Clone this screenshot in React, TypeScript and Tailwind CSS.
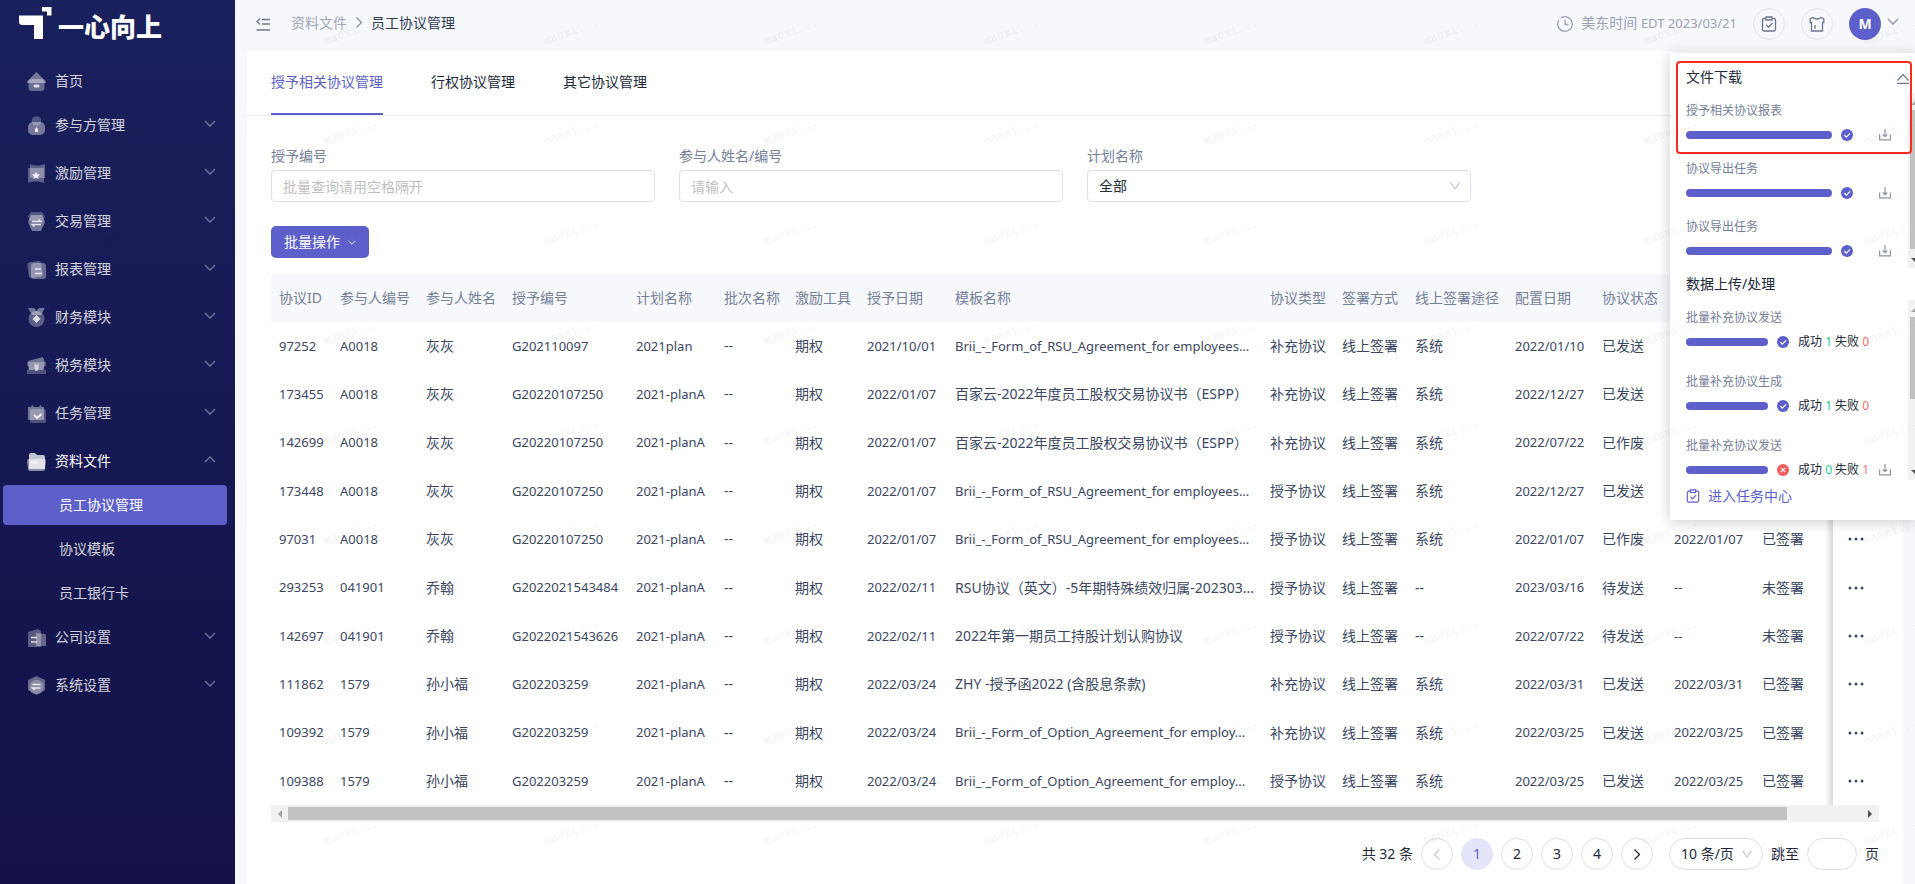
import type { ReactNode } from "react";
import { clsx } from "clsx";

type MenuItem = {
  label: string;
  icon: ReactNode;
  open?: boolean;
  leaf?: boolean;
  children?: string[];
};

type Agreement = {
  id: string;
  code: string;
  name: string;
  grant: string;
  plan: string;
  grantDate: string;
  template: string;
  type: string;
  channel: string;
  configDate: string;
  status: string;
  signDate: string;
  signStatus: string;
};

type UploadTask = {
  name: string;
  success: number;
  failed: number;
};

const menu: MenuItem[] = [
  {
    label: "首页",
    leaf: true,
    icon: (
      <>
        <path d="M9.500 0 19 9.500a1 1 0 0 1-.7 1.500H.7A1 1 0 0 1 0 9.500z" opacity=".4" />
        <rect x="1.500" y="7" width="16" height="12" rx="3.500" opacity=".35" />
        <rect x="6.500" y="12.500" width="6" height="3" rx="1.500" opacity=".8" />
      </>
    ),
  },
  {
    label: "参与方管理",
    icon: (
      <>
        <circle cx="9.500" cy="5" r="4.800" opacity=".25" />
        <rect x="1" y="6" width="17" height="13" rx="5" opacity=".4" />
        <path d="M9.500 11c1.500 1.500 2 3 1.500 5H8c-.5-2 0-3.500 1.500-5z" opacity=".85" />
      </>
    ),
  },
  {
    label: "激励管理",
    icon: (
      <>
        <path d="M3 0c4 2 9 2 15 0v14H3z" opacity=".3" />
        <path d="M1 4h16v15c-5-2-11-2-16 0z" opacity=".3" />
        <path d="m9 7.500 1.200 2.500 2.800.4-2 2 .5 2.700L9 13.800l-2.500 1.300.5-2.700-2-2 2.800-.4z" opacity=".85" />
      </>
    ),
  },
  {
    label: "交易管理",
    icon: (
      <>
        <path d="M4 0h11l3 4-2 5H3L1 4z" opacity=".25" />
        <path d="M4 3h11l3 7-4 9H5l-4-9z" opacity=".4" />
        <path d="M5 9.500h9l-2.500-2M14 12.500H5l2.500 2" fill="none" stroke="#fff" strokeWidth="1.300" opacity=".8" />
      </>
    ),
  },
  {
    label: "报表管理",
    icon: (
      <>
        <rect x="1" y="1.500" width="14" height="16" rx="3" transform="rotate(-8 8 9)" opacity=".3" />
        <rect x="4" y="3" width="15" height="16" rx="3" opacity=".35" />
        <path d="M8 9h6M8 13.500h7" stroke="#fff" strokeWidth="1.600" opacity=".8" />
      </>
    ),
  },
  {
    label: "财务模块",
    icon: (
      <>
        <path d="M1 0h6l2.500 3L12 0h6l-4 7H5z" opacity=".4" />
        <circle cx="9.500" cy="11" r="8" opacity=".3" />
        <path d="m9.500 7 4 4-4 4-4-4z" opacity=".8" />
      </>
    ),
  },
  {
    label: "税务模块",
    icon: (
      <>
        <path d="M1 5 16 1l2 6-2 7H2z" opacity=".4" />
        <path d="M0 6h19v4a2 2 0 0 0 0 4v4H0v-4a2 2 0 0 0 0-4z" opacity=".25" />
        <path d="m7.500 7 2 2 2-2v5l-1 3h-2l-1-3z" opacity=".6" />
      </>
    ),
  },
  {
    label: "任务管理",
    icon: (
      <>
        <path d="M1 3h3l1.500-2L7 3h5l1.500-2L15 3h2v13H1z" opacity=".4" />
        <rect x="3" y="5" width="16" height="14" rx="2" opacity=".25" />
        <path d="m7 11 3 3 4.500-4" fill="none" stroke="#fff" strokeWidth="1.800" opacity=".9" />
      </>
    ),
  },
  {
    label: "资料文件",
    open: true,
    children: ["员工协议管理", "协议模板", "员工银行卡"],
    icon: (
      <>
        <path d="M2 3a2 2 0 0 1 2-2h4l2 2h6a2 2 0 0 1 2 2v12H2z" opacity=".75" />
        <path d="M0 9a2 2 0 0 1 2-2h15a2 2 0 0 1 2 2l-1 8a2 2 0 0 1-2 2H3a2 2 0 0 1-2-2z" opacity=".5" />
        <path d="M4 10.500h6" stroke="#fff" strokeWidth="1.600" />
      </>
    ),
  },
  {
    label: "公司设置",
    icon: (
      <>
        <path d="M1 4l10-3 3 2v16H1z" opacity=".3" />
        <path d="M9 5l9 1a1 1 0 0 1 1 1v11H9z" opacity=".35" />
        <path d="M4 9.500h6M4 14h6" stroke="#fff" strokeWidth="1.600" opacity=".8" />
      </>
    ),
  },
  {
    label: "系统设置",
    icon: (
      <>
        <path d="M9.500 0 18 4v10l-8.500 5L1 14V4z" opacity=".35" />
        <rect x="2.500" y="4" width="14" height="14" rx="6" opacity=".25" />
        <path d="M5.500 8.500h8M13.500 12h-8l2.500 2" fill="none" stroke="#fff" strokeWidth="1.300" opacity=".8" />
      </>
    ),
  },
];

const columns = [
  "协议ID",
  "参与人编号",
  "参与人姓名",
  "授予编号",
  "计划名称",
  "批次名称",
  "激励工具",
  "授予日期",
  "模板名称",
  "协议类型",
  "签署方式",
  "线上签署途径",
  "配置日期",
  "协议状态",
];

const rsu = "Brii_-_Form_of_RSU_Agreement_for employees...";
const option = "Brii_-_Form_of_Option_Agreement_for employ...";
const espp = "百家云-2022年度员工股权交易协议书（ESPP）";

const agreements: Agreement[] = [
  { id: "97252", code: "A0018", name: "灰灰", grant: "G202110097", plan: "2021plan", grantDate: "2021/10/01", template: rsu, type: "补充协议", channel: "系统", configDate: "2022/01/10", status: "已发送", signDate: "", signStatus: "" },
  { id: "173455", code: "A0018", name: "灰灰", grant: "G20220107250", plan: "2021-planA", grantDate: "2022/01/07", template: espp, type: "补充协议", channel: "系统", configDate: "2022/12/27", status: "已发送", signDate: "", signStatus: "" },
  { id: "142699", code: "A0018", name: "灰灰", grant: "G20220107250", plan: "2021-planA", grantDate: "2022/01/07", template: espp, type: "补充协议", channel: "系统", configDate: "2022/07/22", status: "已作废", signDate: "", signStatus: "" },
  { id: "173448", code: "A0018", name: "灰灰", grant: "G20220107250", plan: "2021-planA", grantDate: "2022/01/07", template: rsu, type: "授予协议", channel: "系统", configDate: "2022/12/27", status: "已发送", signDate: "", signStatus: "" },
  { id: "97031", code: "A0018", name: "灰灰", grant: "G20220107250", plan: "2021-planA", grantDate: "2022/01/07", template: rsu, type: "授予协议", channel: "系统", configDate: "2022/01/07", status: "已作废", signDate: "2022/01/07", signStatus: "已签署" },
  { id: "293253", code: "041901", name: "乔翰", grant: "G2022021543484", plan: "2021-planA", grantDate: "2022/02/11", template: "RSU协议（英文）-5年期特殊绩效归属-202303...", type: "授予协议", channel: "--", configDate: "2023/03/16", status: "待发送", signDate: "--", signStatus: "未签署" },
  { id: "142697", code: "041901", name: "乔翰", grant: "G2022021543626", plan: "2021-planA", grantDate: "2022/02/11", template: "2022年第一期员工持股计划认购协议", type: "授予协议", channel: "--", configDate: "2022/07/22", status: "待发送", signDate: "--", signStatus: "未签署" },
  { id: "111862", code: "1579", name: "孙小福", grant: "G202203259", plan: "2021-planA", grantDate: "2022/03/24", template: "ZHY -授予函2022 (含股息条款)", type: "补充协议", channel: "系统", configDate: "2022/03/31", status: "已发送", signDate: "2022/03/31", signStatus: "已签署" },
  { id: "109392", code: "1579", name: "孙小福", grant: "G202203259", plan: "2021-planA", grantDate: "2022/03/24", template: option, type: "补充协议", channel: "系统", configDate: "2022/03/25", status: "已发送", signDate: "2022/03/25", signStatus: "已签署" },
  { id: "109388", code: "1579", name: "孙小福", grant: "G202203259", plan: "2021-planA", grantDate: "2022/03/24", template: option, type: "授予协议", channel: "系统", configDate: "2022/03/25", status: "已发送", signDate: "2022/03/25", signStatus: "已签署" },
];

const downloads = ["授予相关协议报表", "协议导出任务", "协议导出任务"];

const uploads: UploadTask[] = [
  { name: "批量补充协议发送", success: 1, failed: 0 },
  { name: "批量补充协议生成", success: 1, failed: 0 },
  { name: "批量补充协议发送", success: 0, failed: 1 },
];

function Chevron({ className, d = "m1 1 5 5 5-5" }: { className?: string; d?: string }) {
  return (
    <svg viewBox="0 0 12 7" className={clsx("shrink-0", className)} fill="none" stroke="currentColor" strokeWidth="1.300">
      <path d={d} />
    </svg>
  );
}

function ClipboardIcon({ className }: { className: string }) {
  return (
    <svg viewBox="0 0 16 16" className={className} fill="none" stroke="currentColor" strokeWidth="1.300">
      <path d="M4.500 2.500H3a1.500 1.500 0 0 0-1.500 1.500v9.500A1.500 1.500 0 0 0 3 15h10a1.500 1.500 0 0 0 1.500-1.500V4A1.500 1.500 0 0 0 13 2.500h-1.500" />
      <path d="M5 1h6v3H5zM5 9l2.500 2.300L11.500 7" />
    </svg>
  );
}

function DownloadIcon() {
  return (
    <svg viewBox="0 0 12 12" className="size-3" fill="none" stroke="#8f95ab" strokeWidth="1.200">
      <path d="M.6 5.500v5.400h10.800V5.500M6 0v7M3.800 5.500 6 7.700l2.200-2.200" />
    </svg>
  );
}

function StatusIcon({ failed }: { failed?: boolean }) {
  return (
    <svg viewBox="0 0 12 12" className="size-3 shrink-0" fill="none" stroke="#fff" strokeWidth="1.200">
      <circle cx="6" cy="6" r="6" fill={failed ? "#f75c5c" : "#5d5fcb"} stroke="none" />
      <path d={failed ? "m3.800 3.800 4.400 4.400M8.200 3.800 3.800 8.200" : "m3.200 6 2.100 2.100L9 4.300"} />
    </svg>
  );
}

function ScrollArrow({ d, muted }: { d: string; muted?: boolean }) {
  return (
    <svg viewBox="0 0 8 8" className="size-2 shrink-0" fill={muted ? "#a3a3a3" : "#505050"}>
      <path d={d} />
    </svg>
  );
}

function Sidebar() {
  return (
    <aside className="w-[235px] shrink-0 bg-linear-to-b from-[#1a205c] to-[#131148]">
      <div className="flex h-[61px] items-start pl-[19px] pt-[7px] text-white">
        <svg viewBox="0 0 33 32" className="h-8 w-[33px]" fill="currentColor">
          <path d="M0 8.500h24V32h-9V18H2l-2-2zM23 0h9.500v8.500H28V4.500h-5z" />
        </svg>
        <span className="ml-1.5 text-[26px] font-black leading-10">一心向上</span>
      </div>
      <nav>
        <ul>
          {menu.map((item) => (
            <li key={item.label}>
              <a
                href="#"
                className={clsx(
                  "flex items-center pl-[27px] pr-[19px]",
                  item.leaf ? "h-10" : "h-12",
                  item.open ? "text-white" : "text-white/80",
                )}
              >
                <svg viewBox="0 0 19 19" className="size-[19px]" fill="#fff">
                  {item.icon}
                </svg>
                <span className="ml-[9px] flex-1">{item.label}</span>
                {!item.leaf && (
                  <Chevron className="mb-1 h-[7px] w-3 text-white/40" d={item.open ? "m1 6 5-5 5 5" : undefined} />
                )}
              </a>
              {item.children && (
                <ul className="flex flex-col gap-1 pl-[3px] pr-2">
                  {item.children.map((child, i) => (
                    <li key={child}>
                      <a
                        href="#"
                        className={clsx(
                          "flex h-10 items-center rounded pl-14",
                          i === 0 ? "bg-[#5d5fcb] text-white" : "text-white/80",
                        )}
                      >
                        {child}
                      </a>
                    </li>
                  ))}
                </ul>
              )}
            </li>
          ))}
        </ul>
      </nav>
    </aside>
  );
}

function Header() {
  return (
    <header className="flex h-[47px] items-center pl-[21px] pr-4">
      <button type="button" aria-label="收起菜单" className="text-[#6b7690]">
        <svg viewBox="0 0 14 14" className="size-3.5" fill="none" stroke="currentColor" strokeWidth="1.300">
          <path d="M6 2.500h8M6 7h8M.5 13H14M4 1.500 1 4.500l3 3" />
        </svg>
      </button>
      <nav className="mb-0.5 ml-[21px] flex items-center">
        <a href="#" className="text-[#a0a6b7]">资料文件</a>
        <Chevron className="mx-1.5 h-[7px] w-3 -rotate-90 text-[#8c93a8]" />
        <span className="text-[#2f3b56]">员工协议管理</span>
      </nav>
      <div className="ml-auto flex items-center">
        <svg viewBox="0 0 16 16" className="size-4" fill="none" stroke="#9aa1b4" strokeWidth="1.300">
          <path d="M4 1.900a7.300 7.300 0 1 1-2.300 2.400M8 4v4.500h3.500" />
        </svg>
        <span className="mb-0.5 ml-2 text-[#9aa1b4]">
          美东时间 <span className="text-[13px]">EDT 2023/03/21</span>
        </span>
        <button type="button" aria-label="任务" className="ml-4 flex size-8 items-center justify-center rounded-full border border-[#e3e4ec] text-[#6b7690]">
          <ClipboardIcon className="size-4" />
        </button>
        <button type="button" aria-label="换肤" className="ml-4 flex size-8 items-center justify-center rounded-full border border-[#e3e4ec] text-[#6b7690]">
          <svg viewBox="0 0 16 16" className="size-4" fill="none" stroke="currentColor" strokeWidth="1.300">
            <path d="M4 1.500C6 3.500 10 3.500 12 1.500L14.800 3v3.500H13.500V15h-11V6.500H1.200V3zM6 9v4" />
          </svg>
        </button>
        <button type="button" className="ml-4 flex items-center">
          <span className="flex size-8 items-center justify-center rounded-full bg-[#5d5fcb] font-bold text-white">M</span>
          <Chevron className="mb-1 ml-1.5 h-[7px] w-3 text-[#8c93a8]" />
        </button>
      </div>
    </header>
  );
}

function Filters() {
  const box = "h-8 w-full rounded border border-[#dfe0e9] bg-white px-[11px] outline-none placeholder:text-[#bfbfbf]";
  return (
    <form className="grid grid-cols-4 gap-6">
      <div>
        <label htmlFor="grant" className="mb-1 block leading-5 text-[#75809a]">授予编号</label>
        <input id="grant" className={box} placeholder="批量查询请用空格隔开" />
      </div>
      <div>
        <label htmlFor="person" className="mb-1 block leading-5 text-[#75809a]">参与人姓名/编号</label>
        <input id="person" className={box} placeholder="请输入" />
      </div>
      <div>
        <label htmlFor="plan" className="mb-1 block leading-5 text-[#75809a]">计划名称</label>
        <div className="relative">
          <select id="plan" className={clsx(box, "appearance-none text-[#22293a]")}>
            <option>全部</option>
          </select>
          <Chevron className="pointer-events-none absolute right-2.5 top-3 h-2 w-3 text-[#c3c7d6]" d="m1.500 0 4.500 6.500L10.500 0" />
        </div>
      </div>
    </form>
  );
}

function Cell({ children, small }: { children: ReactNode; small?: boolean }) {
  return <td className={clsx("truncate px-2", small && "text-[13px]")}>{children}</td>;
}

function AgreementTable() {
  return (
    <div>
      <table className="h-[531px] w-full table-fixed whitespace-nowrap text-left">
        <colgroup>
          <col className="w-[61px]" />
          <col className="w-[86px]" />
          <col className="w-[86px]" />
          <col className="w-[124px]" />
          <col className="w-[88px]" />
          <col className="w-[71px]" />
          <col className="w-[72px]" />
          <col className="w-[88px]" />
          <col />
          <col className="w-[72px]" />
          <col className="w-[73px]" />
          <col className="w-[100px]" />
          <col className="w-[87px]" />
          <col className="w-[72px]" />
          <col className="w-[88px]" />
          <col className="w-[79px]" />
          <col className="w-[46px]" />
        </colgroup>
        <thead>
          <tr className="h-12 bg-[#f7f8fc] text-[#75809a]">
            {columns.map((column) => (
              <th key={column} className="px-2 font-normal">{column}</th>
            ))}
            <th colSpan={3} />
          </tr>
        </thead>
        <tbody className="text-[#3b4763]">
          {agreements.map((row) => (
            <tr key={row.id} className="h-12">
              <Cell small>{row.id}</Cell>
              <Cell small>{row.code}</Cell>
              <Cell>{row.name}</Cell>
              <Cell small>{row.grant}</Cell>
              <Cell small>{row.plan}</Cell>
              <Cell>--</Cell>
              <Cell>期权</Cell>
              <Cell small>{row.grantDate}</Cell>
              <Cell small={row.template.startsWith("Brii")}>{row.template}</Cell>
              <Cell>{row.type}</Cell>
              <Cell>线上签署</Cell>
              <Cell>{row.channel}</Cell>
              <Cell small>{row.configDate}</Cell>
              <Cell>{row.status}</Cell>
              <Cell small>{row.signDate}</Cell>
              <Cell>{row.signStatus}</Cell>
              <td className="relative bg-white before:absolute before:inset-y-0 before:-left-2 before:w-2 before:bg-linear-to-l before:from-black/15 before:to-transparent">
                <button type="button" aria-label="更多" className="flex w-full items-center justify-center py-5">
                  <svg viewBox="0 0 16 4" className="h-1 w-4" fill="#3b4763">
                    <circle cx="2" cy="2" r="1.500" />
                    <circle cx="8" cy="2" r="1.500" />
                    <circle cx="14" cy="2" r="1.500" />
                  </svg>
                </button>
              </td>
            </tr>
          ))}
        </tbody>
      </table>
      <div className="flex h-[17px] items-center gap-1 bg-[#f1f1f1] px-[5px]">
        <ScrollArrow d="M6 0v8L2 4z" muted />
        <div className="flex-1">
          <div className="h-[13px] w-20/21 bg-[#c1c1c1]" />
        </div>
        <ScrollArrow d="M2 0v8l4-4z" />
      </div>
    </div>
  );
}

function Pagination() {
  const round = "flex size-8 items-center justify-center rounded-full border";
  return (
    <div className="mt-4 flex items-center justify-end gap-2 text-[#22293a]">
      <span>共 32 条</span>
      <button type="button" aria-label="上一页" className={clsx(round, "border-[#dfe0e9]")}>
        <Chevron className="h-[7px] w-3 rotate-90 text-[#c3c7d6]" />
      </button>
      {[1, 2, 3, 4].map((page) => (
        <button
          key={page}
          type="button"
          className={clsx(round, page === 1 ? "border-[#e4e4fa] bg-[#e4e4fa] text-[#5d5fcb]" : "border-[#dfe0e9]")}
        >
          {page}
        </button>
      ))}
      <button type="button" aria-label="下一页" className={clsx(round, "border-[#dfe0e9]")}>
        <Chevron className="h-[7px] w-3 -rotate-90" />
      </button>
      <div className="relative ml-2">
        <select aria-label="每页条数" className="h-8 w-[94px] appearance-none rounded-full border border-[#dfe0e9] bg-white pl-[11px] outline-none">
          <option>10 条/页</option>
        </select>
        <Chevron className="pointer-events-none absolute right-2.5 top-3 h-2 w-3 text-[#c3c7d6]" d="m1.500 0 4.500 6.500L10.500 0" />
      </div>
      <label htmlFor="jump">跳至</label>
      <input id="jump" className="h-8 w-[50px] rounded-full border border-[#dfe0e9] px-3 outline-none" />
      <span>页</span>
    </div>
  );
}

function PanelScrollbar({ thumb }: { thumb: string }) {
  return (
    <div className="flex w-[7px] shrink-0 flex-col items-end overflow-hidden bg-[#f1f1f1] py-1">
      <ScrollArrow d="M4 8 8 4v4z" muted />
      <div className={clsx("mt-[5px] w-[5px] bg-[#c1c1c1]", thumb)} />
      <div className="mt-auto flex">
        <ScrollArrow d="M4 2h4v4z" />
      </div>
    </div>
  );
}

function TaskPanel() {
  return (
    <section className="absolute right-0 top-[53px] w-[245px] bg-white pb-3 pt-3 shadow-[0_2px_14px_rgba(0,0,0,0.2)]">
      <div className="flex h-6 items-center justify-between pl-4 pr-1.5 text-[#22293a]">
        <h2>文件下载</h2>
        <button type="button" aria-label="收起" className="mt-1 text-[#6b7690]">
          <svg viewBox="0 0 12 10" className="h-2.5 w-3" fill="none" stroke="currentColor" strokeWidth="1.200">
            <path d="m.5 6.500 5.500-6 5.500 6M0 9.400h12" />
          </svg>
        </button>
      </div>
      <div className="mt-1 flex h-[175px]">
        <ul className="flex flex-1 flex-col gap-3.5 pl-4 pr-[17px] pt-2 text-xs">
          {downloads.map((name, i) => (
            <li key={i}>
              <p className="leading-5 text-[#75809a]">{name}</p>
              <div className="mb-0.5 mt-1.5 flex h-4 items-center">
                <div className="h-2 w-[146px] rounded-full bg-[#5d5fcb]" />
                <span className="ml-[9px]"><StatusIcon /></span>
                <button type="button" aria-label="下载" className="ml-auto"><DownloadIcon /></button>
              </div>
            </li>
          ))}
        </ul>
        <PanelScrollbar thumb="h-[139px]" />
      </div>
      <h2 className="mt-1 h-6 pl-4 leading-6 text-[#22293a]">数据上传/处理</h2>
      <div className="mt-1 flex h-[180px]">
        <ul className="flex flex-1 flex-col gap-5 pl-4 pr-[17px] pt-2 text-xs">
          {uploads.map((task, i) => (
            <li key={i}>
              <p className="leading-5 text-[#75809a]">{task.name}</p>
              <div className="mb-0.5 mt-1.5 flex h-4 items-center whitespace-nowrap text-[#22293a]">
                <div className="h-2 w-[82px] rounded-full bg-[#5d5fcb]" />
                <span className="ml-[9px]"><StatusIcon failed={task.failed > 0} /></span>
                <span className="ml-[9px]">
                  成功 <span className="text-[#1fc98b]">{task.success}</span> 失败{" "}
                  <span className="text-[#f77070]">{task.failed}</span>
                </span>
                {task.failed > 0 && (
                  <button type="button" aria-label="下载" className="ml-auto"><DownloadIcon /></button>
                )}
              </div>
            </li>
          ))}
        </ul>
        <PanelScrollbar thumb="h-[82px]" />
      </div>
      <a href="#" className="mt-1 flex h-6 items-center gap-2 pl-4 text-[#5d5fcb]">
        <ClipboardIcon className="size-3.5" />
        进入任务中心
      </a>
      <div className="pointer-events-none absolute left-1.5 right-[3px] top-2 h-[93px] rounded border-2 border-[#fb2a1c]" />
    </section>
  );
}

function Watermark() {
  return (
    <svg className="pointer-events-none absolute inset-0 h-full w-full" aria-hidden="true">
      <pattern id="watermark" width="220" height="100" patternUnits="userSpaceOnUse" x="103" y="0">
        <text x="2" y="45" transform="rotate(-20 2 45)" fontSize="12" fill="#000" fillOpacity=".05" fontFamily="'Liberation Mono', monospace">
          maoxi...
        </text>
      </pattern>
      <rect width="100%" height="100%" fill="url(#watermark)" />
    </svg>
  );
}

export default function App() {
  return (
    <div className="relative flex min-h-screen overflow-hidden bg-[#f7f8fc] font-['Noto_Sans','Noto_Sans_CJK_SC',sans-serif] text-sm">
      <Sidebar />
      <div className="flex min-w-0 flex-1 flex-col">
        <Header />
        <main className="ml-3 mr-3 mt-1 flex-1 bg-white pb-3.5">
          <nav className="flex h-[65px] gap-12 border-b border-[#ececf1] px-6 text-[#22293a]">
            <a href="#" className="border-b-2 border-[#5d5fcb] leading-[62px] text-[#5d5fcb]">授予相关协议管理</a>
            <a href="#" className="leading-[62px]">行权协议管理</a>
            <a href="#" className="leading-[62px]">其它协议管理</a>
          </nav>
          <div className="px-6 pt-[30px]">
            <Filters />
            <button type="button" className="mb-4 mt-6 flex h-8 w-[98px] items-center justify-center gap-2 rounded-[5px] bg-[#5d5fcb] text-white">
              批量操作
              <Chevron className="h-[5px] w-2" />
            </button>
            <AgreementTable />
            <Pagination />
          </div>
        </main>
      </div>
      <TaskPanel />
      <Watermark />
    </div>
  );
}
